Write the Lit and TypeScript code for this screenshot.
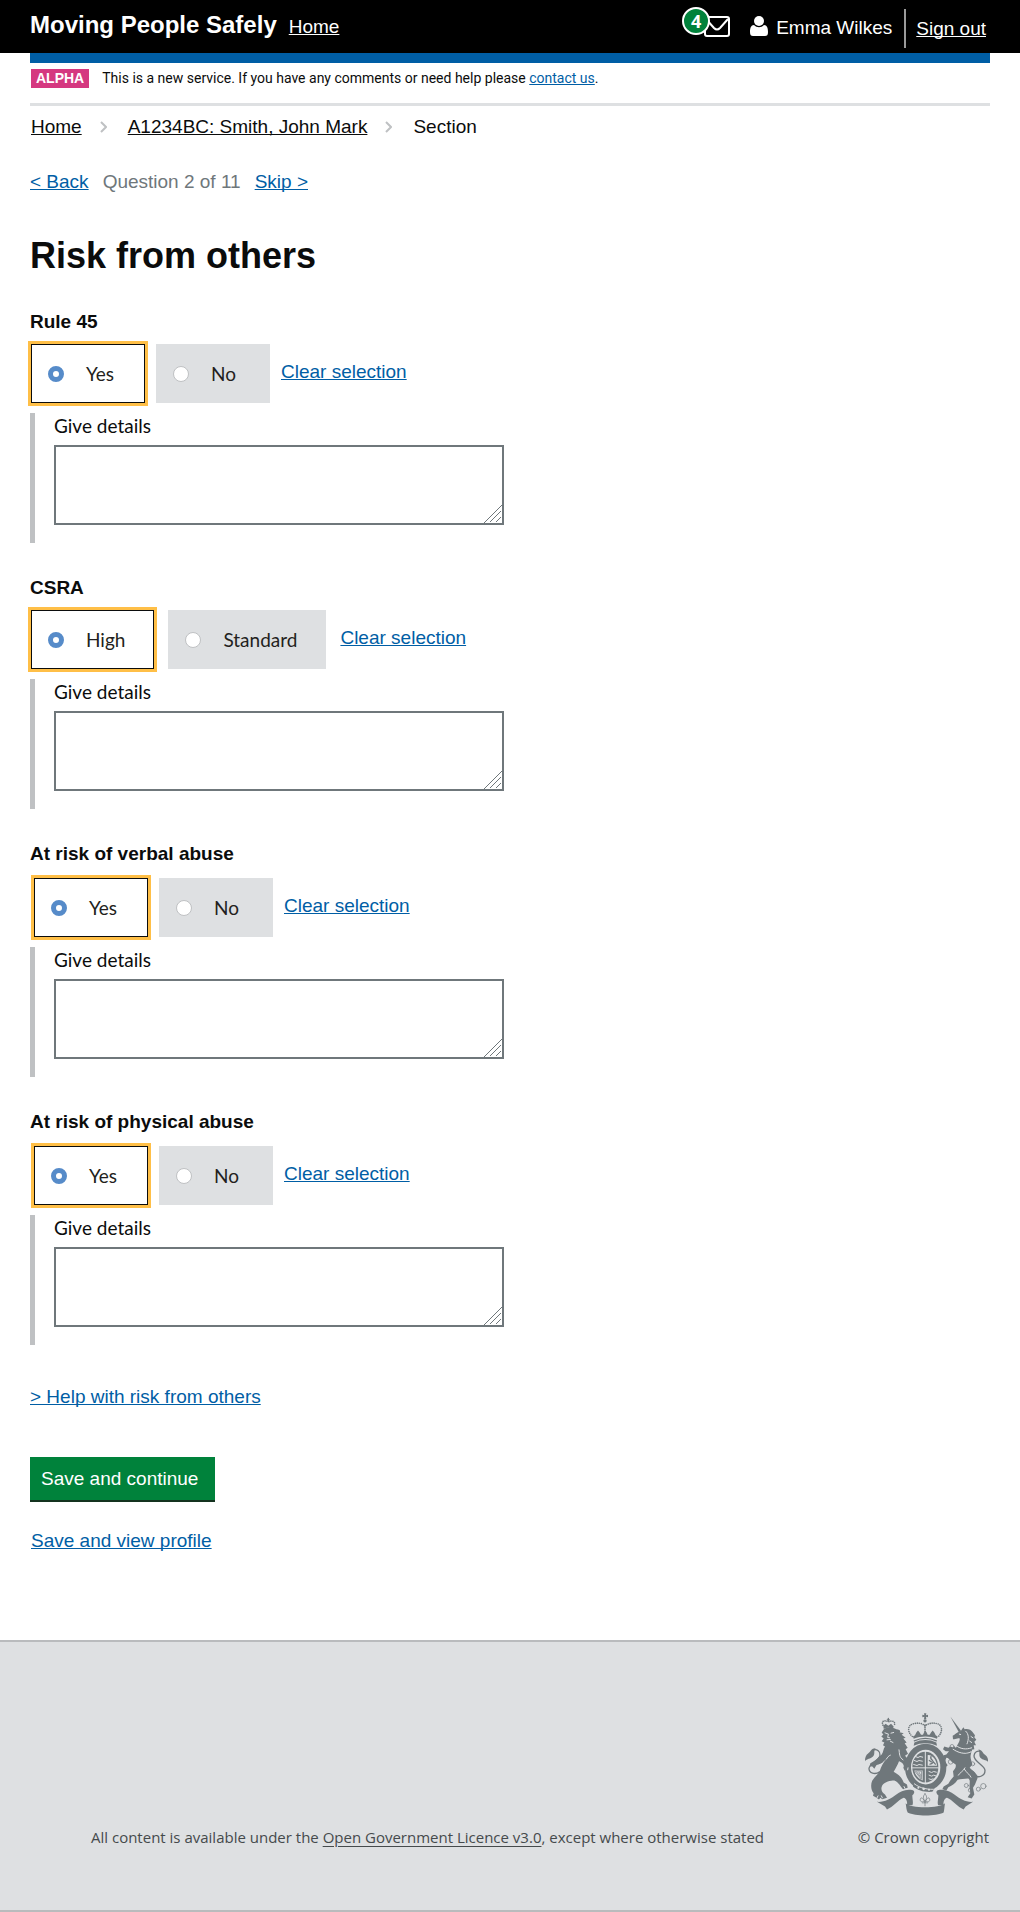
import { LitElement, html, css, nothing } from "lit";
import { customElement, property, state } from "lit/decorators.js";
import { classMap } from "lit/directives/class-map.js";

interface Question {
  id: string;
  title: string;
  options: string[];
  spacing: "tight" | "wide" | "inset";
}

const QUESTIONS: Question[] = [
  { id: "rule45", title: "Rule 45", options: ["Yes", "No"], spacing: "tight" },
  { id: "csra", title: "CSRA", options: ["High", "Standard"], spacing: "wide" },
  { id: "verbal", title: "At risk of verbal abuse", options: ["Yes", "No"], spacing: "inset" },
  { id: "physical", title: "At risk of physical abuse", options: ["Yes", "No"], spacing: "inset" },
];

const linkStyles = css`
  a {
    color: #005ea5;
    text-decoration: underline;
    text-decoration-skip-ink: none;
  }
`;

@customElement("royal-crest")
class RoyalCrest extends LitElement {
  static styles = css`
    :host { display: block; }
    .crest { display: block; width: 124px; height: 103px; }
    .solid { fill: #6f777b; }
    .line { fill: none; stroke: #6f777b; stroke-width: 4; stroke-linecap: round; stroke-linejoin: round; }
    .thin { fill: none; stroke: #6f777b; stroke-width: 2; stroke-linecap: round; }
    .beads { fill: none; stroke: #6f777b; stroke-width: 5; stroke-linecap: round; stroke-dasharray: 0 6; }
    .ground { fill: #dee0e2; }
    .cut { fill: none; stroke: #dee0e2; stroke-width: 3; stroke-linecap: round; }
    .ring { fill: none; stroke: #6f777b; stroke-width: 18; }
  `;

  render() {
    return html`
      <svg class="crest" viewBox="48 38 372 308" aria-hidden="true">
        <!-- tails -->
        <path class="line" d="M92 214 C78 224 60 218 60 204 C60 190 92 180 93 164 C94 152 84 146 74 148" />
        <path class="solid" d="M80 143 C68 142 66 152 58 158 C50 163 48 172 48 182 C54 174 64 176 72 168 C80 160 72 152 80 143 Z" />
        <path class="line" d="M372 222 C388 236 408 226 408 210 C408 194 374 184 375 166 C376 154 386 150 394 153" />
        <path class="solid" d="M388 147 C400 148 400 157 408 163 C416 168 418 176 417 184 C410 177 402 180 394 172 C388 164 394 154 388 147 Z" />

        <!-- ribbon -->
        <path class="solid" d="M84 304 C104 306 124 296 142 282 C154 272 172 264 192 269 C198 272 196 280 190 284 C190 296 194 308 190 314 L174 314 C176 304 172 294 164 292 C148 298 132 320 114 327 L108 318 Z" />
        <path class="solid" d="M372 304 C352 306 334 296 316 282 C304 272 286 264 266 269 C260 272 262 280 268 284 C268 296 264 308 268 314 L284 314 C282 304 286 294 294 292 C310 298 326 320 344 327 L350 318 Z" />
        <path class="solid" d="M170 308 C184 324 272 324 288 308 C286 320 286 328 284 336 C262 348 198 348 176 336 C172 328 172 320 170 308 Z" />

        <!-- crown -->
        <path class="solid" d="M225 38 h7 l-1 6 6 -1 v7 l-6 -1 1 7 h-7 l1 -7 -6 1 v-7 l6 1 Z" />
        <circle class="solid" cx="228" cy="61" r="5" />
        <path class="beads" d="M190 108 C174 94 176 74 192 70 C206 66 220 68 228 76 C238 68 252 66 266 70 C280 74 282 94 268 108" />
        <path class="beads" d="M228 74 V94" />
        <path class="solid" d="M192 108 L198 104 202 96 207 90 212 96 216 103 222 103 225 96 229 91 233 96 236 103 242 103 246 96 251 90 256 96 260 104 266 108 264 115 C242 106 216 106 194 115 Z" />
        <path class="line" d="M196 121 C216 112 242 112 262 121" />
        <path class="solid" d="M196 126 C216 116 242 116 262 126 L264 136 C242 126 216 126 194 136 Z" />

        <!-- garter -->
        <ellipse class="ring" cx="230" cy="200" rx="53" ry="61" />
        <ellipse class="solid" cx="229" cy="200" rx="39" ry="46" />
        <path class="cut" d="M229 152 V248 M188 202 H272" />
        <path class="cut" d="M199 168 l8 3 6 -3 8 2 M196 180 l8 3 6 -3 10 2 M194 192 l10 3 6 -3 10 2" />
        <path class="cut" d="M240 213 l8 3 6 -3 8 2 M240 224 l8 3 6 -3 6 2 M240 235 l6 2 6 -2" />
        <path class="ground" d="M236 164 C250 162 262 178 264 196 L236 196 Z" />
        <path class="line" d="M243 191 C250 190 256 184 250 179 C246 176 244 172 246 168 M247 184 L241 180 M253 184 L259 191" />
        <path class="ground" d="M196 210 H221 V240 C207 234 198 224 196 210 Z" />
        <path class="thin" d="M200 213 C208 209 214 213 218 212 L217 235 Z M205 216 L215 230 M210 215 L216 226" />
        <path class="solid" d="M192 250 L204 244 C218 254 240 256 258 262 L250 274 C228 276 206 270 192 258 Z" />
        <path class="cut" d="M196 250 C214 264 236 268 262 266" />
        <circle class="ground" cx="208" cy="262" r="3" />
        <circle class="ground" cx="224" cy="265" r="4" />
        <circle class="ground" cx="240" cy="268" r="3" />

        <!-- badge below the garter -->
        <path class="thin" d="M228 280 C218 290 226 296 228 306 C230 296 238 290 228 280 Z M226 302 C216 308 210 300 216 292 C222 292 224 298 226 302 M230 302 C240 308 246 300 240 292 C234 292 232 298 230 302 M220 307 H236 M228 306 V316" />

        <!-- lion -->
        <path class="beads" d="M102 74 C96 62 106 58 118 64 C130 58 142 64 135 76" />
        <path class="line" d="M118 54 V62 M115 58 H121" />
        <path class="solid" d="M103 76 L110 70 118 76 126 70 134 78 132 85 C122 81 112 81 104 85 Z" />
        <path class="solid" d="M106 84 C118 80 132 80 142 86 C152 86 156 92 152 95 L164 98 158 103 170 112 163 114 173 126 167 128 176 142 170 146 177 160 168 166 C174 172 182 182 185 192 L184 212 176 216 172 206 167 211 163 202 C168 192 158 184 150 182 C146 194 140 202 134 214 C148 222 160 232 164 246 L174 252 176 262 162 266 C154 258 150 246 136 240 C124 240 108 244 100 254 C94 264 98 276 108 282 L114 292 100 296 94 292 90 297 80 290 72 286 74 278 C66 270 64 252 70 240 C78 228 86 222 92 212 C96 198 104 184 112 176 L104 182 C98 190 92 190 82 194 L76 205 70 198 62 197 64 188 72 184 C82 178 88 170 98 162 C104 154 102 146 108 138 L102 134 106 126 98 122 104 114 97 108 103 102 98 96 Z" />
        <path class="cut" d="M108 97 l8 3 M126 98 l8 -2 M118 101 l-2 10 6 1 M114 118 l10 -1 M124 122 l8 4" />
        <path class="cut" d="M150 148 C152 160 150 170 162 178 M112 176 C116 170 118 166 124 164" />
        <path class="cut" d="M84 292 l3 -6 M100 292 l-3 -6 M168 264 l-3 -6 M176 208 l1 -6" />

        <!-- unicorn -->
        <path class="solid" d="M304 48 L330 96 336 91 Z" />
        <path class="solid" d="M336 91 L343 80 347 86 C358 84 366 88 370 94 L378 104 376 110 382 118 376 124 381 134 374 134 376 146 368 148 366 160 C362 172 368 182 370 192 L362 202 C372 212 386 220 386 232 L378 252 372 262 376 282 368 294 356 290 364 278 362 264 C360 250 366 240 358 234 C346 236 334 234 326 238 C318 250 308 256 298 260 L292 270 280 266 284 258 298 250 C302 242 308 234 314 228 L312 212 C318 206 322 200 320 192 L308 184 C302 178 298 172 292 172 L288 182 296 194 290 200 282 188 278 172 284 164 292 162 300 152 290 152 282 146 286 138 298 142 304 138 C310 140 316 142 322 140 C326 130 334 120 332 114 C324 112 320 118 312 116 L311 106 C318 102 324 96 330 94 Z" />
        <path class="cut" d="M331 101 l4 1 M350 92 C360 100 360 116 354 130 M366 108 l6 4 M362 122 l6 4" />
        <path class="cut" d="M312 146 C326 156 348 164 366 154" />
        <path class="cut" d="M320 134 C334 146 350 148 368 142" />
        <path class="beads" d="M316 141 C332 154 350 157 368 149" />
        <path class="cut" d="M348 202 C342 214 332 216 328 224 M346 206 C352 216 362 222 366 230" />
        <g class="thin">
          <circle cx="309" cy="138" r="6" />
          <circle cx="305" cy="184" r="7" />
          <circle cx="371" cy="190" r="6" />
          <circle cx="369" cy="217" r="6" />
          <circle cx="352" cy="255" r="6" />
          <circle cx="364" cy="269" r="6" />
          <circle cx="388" cy="266" r="6" />
          <circle cx="403" cy="257" r="8" />
        </g>
      </svg>
    `;
  }
}

@customElement("site-header")
class SiteHeader extends LitElement {
  static styles = css`
    :host { display: block; color: #fff; }
    .bar {
      display: flex;
      flex-wrap: wrap;
      justify-content: space-between;
      min-height: 53px;
      padding: 0 34px 0 30px;
      background: #000;
    }
    .brand { display: flex; align-items: baseline; gap: 12px; padding-top: 10px; }
    .name { font-size: 24px; line-height: 30px; font-weight: bold; }
    a { color: #fff; text-decoration-skip-ink: none; }
    .account { display: flex; align-items: center; height: 42px; padding-top: 7px; }
    .messages {
      display: flex;
      align-self: flex-start;
      align-items: flex-end;
      height: 30px;
      margin-right: 20px;
      text-decoration: none;
    }
    .count {
      z-index: 1;
      box-sizing: border-box;
      width: 28px;
      height: 28px;
      margin-bottom: 2px;
      border: 2px solid #fff;
      border-radius: 50%;
      background: #00823b;
      font: bold 18px/24px "Open Sans", sans-serif;
      text-align: center;
    }
    .mail { display: block; width: 26px; height: 21px; margin-left: -6px; }
    .person { align-self: flex-start; width: 18px; height: 20px; margin: 9px 8px 0 0; }
    .user { margin-right: 12px; }
    .out { padding-left: 10px; border-left: 2px solid #9a9a9a; line-height: 39px; }
    .strip { height: 10px; margin: 0 30px; background: #005ea5; }
  `;

  render() {
    return html`
      <header>
        <div class="bar">
          <div class="brand">
            <span class="name">Moving People Safely</span>
            <a href="#home">Home</a>
          </div>
          <div class="account">
            <a class="messages" href="#messages" aria-label="4 messages">
              <span class="count">4</span>
              <svg class="mail" viewBox="0 0 26 21" fill="none" stroke="#fff" stroke-width="2" aria-hidden="true">
                <rect x="1" y="1" width="24" height="19" rx="2" />
                <path d="M2 3 L10 12 Q13 15 16 12 L24 3" />
              </svg>
            </a>
            <svg class="person" viewBox="0 0 18 20" fill="#fff" aria-hidden="true">
              <circle cx="9" cy="5" r="5" />
              <path d="M4 9 C1 9 0 12 0 16 C0 19 1 20 3 20 H15 C17 20 18 19 18 16 C18 12 17 9 14 9 C11 12 7 12 4 9 Z" />
            </svg>
            <span class="user">Emma Wilkes</span>
            <a class="out" href="#sign-out">Sign out</a>
          </div>
        </div>
        <div class="strip"></div>
      </header>
    `;
  }
}

@customElement("risk-question")
class RiskQuestion extends LitElement {
  @property({ attribute: false }) question!: Question;
  @state() private selected = 0;

  static styles = [
    linkStyles,
    css`
      :host { display: block; }
      fieldset { min-width: 0; margin: 0; padding: 0; border: 0; }
      legend { padding: 0; color: #0b0c0c; font-weight: bold; line-height: 24px; }
      .options { display: flex; flex-wrap: wrap; gap: 11px; padding: 10px 0 0 1px; }
      .options.wide { gap: 14px; }
      .options.inset { padding: 12px 0 0 4px; }
      .choice {
        display: flex;
        align-items: center;
        gap: 22px;
        box-sizing: border-box;
        min-width: 114px;
        height: 59px;
        padding: 0 28px 0 16px;
        border: 1px solid #dee0e2;
        background: #dee0e2;
        color: #231f20;
        font: 19px/24px Lato, sans-serif;
      }
      .choice.on {
        border-color: #0b0c0c;
        background: #fff;
        box-shadow: 0 0 0 3px #ffbf47;
      }
      .radio {
        appearance: none;
        box-sizing: border-box;
        width: 16px;
        height: 16px;
        margin: 0;
        border: 1px solid #bfc1c3;
        border-radius: 50%;
        background: #fff;
      }
      .radio:checked { border: 5px solid #568bc9; }
      .clear { align-self: flex-start; margin-top: 16px; line-height: 24px; }
      .panel {
        margin-top: 10px;
        padding: 1px 0 18px 19px;
        border-left: 5px solid #bfc1c3;
      }
      .panel label {
        display: block;
        margin-bottom: 7px;
        color: #0b0c0c;
        font: 19px/24px Lato, sans-serif;
      }
      .field { position: relative; width: 450px; max-width: 100%; }
      textarea {
        display: block;
        box-sizing: border-box;
        width: 100%;
        height: 80px;
        padding: 6px;
        border: 2px solid #6f777b;
        border-radius: 0;
        resize: none;
        font: inherit;
      }
      .grip {
        position: absolute;
        right: 2px;
        bottom: 2px;
        width: 18px;
        height: 18px;
        stroke: #6f777b;
        pointer-events: none;
      }
    `,
  ];

  private clear(event: Event) {
    event.preventDefault();
    this.selected = -1;
  }

  render() {
    const { id, title, options, spacing } = this.question;
    return html`
      <fieldset>
        <legend>${title}</legend>
        <div class=${classMap({ options: true, [spacing]: true })}>
          ${options.map(
            (option, index) => html`
              <label class=${classMap({ choice: true, on: index === this.selected })}>
                <input
                  class="radio"
                  type="radio"
                  name=${id}
                  .checked=${index === this.selected}
                  @change=${() => (this.selected = index)}
                />
                ${option}
              </label>
            `,
          )}
          <a class="clear" href="#clear" @click=${this.clear}>Clear selection</a>
        </div>
        ${this.selected === 0
          ? html`
              <div class="panel">
                <label for="details">Give details</label>
                <div class="field">
                  <textarea id="details" name="${id}-details"></textarea>
                  <svg class="grip" viewBox="0 0 18 18" aria-hidden="true">
                    <path d="M0 18 L18 0 M6 17 L17 6 M12 17 L17 12" />
                  </svg>
                </div>
              </div>
            `
          : nothing}
      </fieldset>
    `;
  }
}

@customElement("site-footer")
class SiteFooter extends LitElement {
  static styles = css`
    :host { display: block; }
    footer {
      display: flex;
      flex-wrap: wrap;
      align-items: flex-end;
      justify-content: space-between;
      gap: 12px;
      padding: 71px 31px 63px 91px;
      border-top: 2px solid #b9bbbd;
      border-bottom: 2px solid #b9bbbd;
      background: #dee0e2;
      color: #454a4c;
      font: 15px/20px "Open Sans", sans-serif;
    }
    a { color: #454a4c; text-underline-offset: 3px; }
    .crown { display: flex; flex-direction: column; align-items: flex-end; gap: 11px; }
  `;

  render() {
    return html`
      <footer>
        <span>All content is available under the <a href="#licence">Open Government Licence v3.0</a>, except where otherwise stated</span>
        <div class="crown">
          <royal-crest></royal-crest>
          <span>© Crown copyright</span>
        </div>
      </footer>
    `;
  }
}

@customElement("app-root")
class AppRoot extends LitElement {
  static styles = [
    linkStyles,
    css`
      :host {
        display: block;
        background: #fff;
        color: #0b0c0c;
        font: 19px/24px "Liberation Sans", Arial, sans-serif;
      }
      .page { padding: 0 30px 87px; }
      .phase {
        display: flex;
        align-items: center;
        gap: 13px;
        padding: 6px 0 15px 1px;
        border-bottom: 3px solid #dee0e2;
        font: 14px/19px Roboto, sans-serif;
      }
      .tag {
        padding: 0 5px;
        background: #d53880;
        color: #fff;
        font: bold 14px/19px "Liberation Sans", Arial, sans-serif;
      }
      .crumbs { display: flex; align-items: center; gap: 18px; padding: 9px 0 0 1px; }
      .crumbs a { color: #0b0c0c; }
      .chevron { width: 7px; height: 12px; margin-right: 3px; fill: none; stroke: #bfc1c3; stroke-width: 2; }
      .progress { display: flex; gap: 14px; margin-top: 31px; color: #6f777b; }
      h1 { margin: 42px 0 34px; font-size: 36px; line-height: 40px; }
      .questions { display: grid; gap: 33px; }
      .help { margin: 40px 0 48px; }
      button {
        display: block;
        height: 45px;
        padding: 0 17px 0 11px;
        border: 0;
        border-bottom: 2px solid #14321f;
        border-radius: 0;
        background: #00823b;
        color: #fff;
        font: inherit;
      }
      .profile { margin: 27px 0 0 1px; }
    `,
  ];

  private chevron() {
    return html`<svg class="chevron" viewBox="0 0 7 12" aria-hidden="true"><path d="M1 1 L6 6 L1 11" /></svg>`;
  }

  render() {
    return html`
      <site-header></site-header>
      <main class="page">
        <div class="phase">
          <strong class="tag">ALPHA</strong>
          <span>This is a new service. If you have any comments or need help please <a href="#contact">contact us</a>.</span>
        </div>
        <nav class="crumbs" aria-label="Breadcrumb">
          <a href="#home">Home</a>
          ${this.chevron()}
          <a href="#profile">A1234BC: Smith, John Mark</a>
          ${this.chevron()}
          <span>Section</span>
        </nav>
        <div class="progress">
          <a href="#back">&lt; Back</a>
          <span>Question 2 of 11</span>
          <a href="#skip">Skip &gt;</a>
        </div>
        <h1>Risk from others</h1>
        <div class="questions">
          ${QUESTIONS.map((q) => html`<risk-question .question=${q}></risk-question>`)}
        </div>
        <div class="help"><a href="#help">&gt; Help with risk from others</a></div>
        <button type="button">Save and continue</button>
        <div class="profile"><a href="#profile">Save and view profile</a></div>
      </main>
      <site-footer></site-footer>
    `;
  }
}
